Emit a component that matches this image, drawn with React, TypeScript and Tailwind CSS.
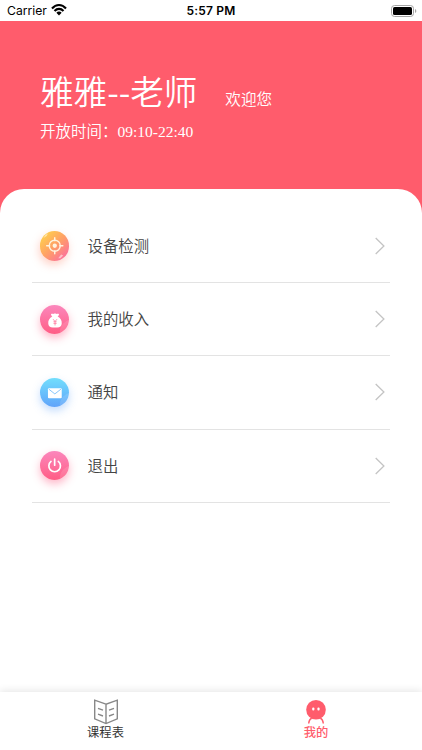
import React from "react";

type RowProps = { label: string; icon: React.ReactNode; tone: string };

function TargetIcon() {
  return (
    <svg viewBox="0 0 30 30" className="size-full" fill="none" stroke="#fff3df">
      <path d="M3.5 7 Q5 3.5 8 2.6 L6.8 5 Z M18.5 27.6 L21.5 24 L23.6 24.8 L20.8 27.6 Z" fill="#fff" fillOpacity=".5" stroke="none" />
      <circle cx="15" cy="15" r="5.6" strokeWidth="1.4" />
      <circle cx="15" cy="15" r="2.2" fill="#fff3df" stroke="none" />
      <path d="M15 6.8v3M15 20.2v3M6.8 15h3M20.2 15h3" strokeWidth="1.5" strokeLinecap="round" />
    </svg>
  );
}

function MoneyBagIcon() {
  return (
    <svg viewBox="0 0 30 30" className="size-full">
      <path d="M30 15A15 15 0 0 1 20 29C20 21 24 17 30 15Z" fill="#fff" fillOpacity=".12" />
      <path d="M11.3 9.2c1-.8 1.9.2 2.7-.2.8-.5 1.6-.5 2.4 0 .8.5 1.7-.6 2.8.2.6.6-.8 2.1-1.4 3.1h-5.2c-.4-1-1.9-2.5-1.3-3.1Z" fill="#fff" />
      <path d="M12.5 11.8h5.5c2.9 1.4 4.3 4.2 4.1 6.9-.1 2.7-1.9 4.1-4.5 4.1h-4.6c-2.7 0-4.5-1.4-4.6-4.1-.2-2.7 1.2-5.5 4.1-6.9Z" fill="#fff" />
      <path d="m13.3 14.4 2 2.4 2-2.4M15.3 16.8v4M13.7 17h3.2M13.7 18.7h3.2" fill="none" stroke="#ff7aa0" strokeWidth=".8" />
    </svg>
  );
}

function MailIcon() {
  return (
    <svg viewBox="0 0 30 30" className="size-full">
      <path d="M30 15A15 15 0 0 1 20 29C20 21 24 17 30 15Z" fill="#fff" fillOpacity=".12" />
      <rect x="8.1" y="10.4" width="14" height="10.2" rx="1" fill="#fff" />
      <path d="m9 11.4 6.1 4.8 6.1-4.8" fill="none" stroke="#68b8fb" strokeWidth=".8" />
    </svg>
  );
}

function PowerIcon() {
  return (
    <svg viewBox="0 0 30 30" className="size-full">
      <path d="M30 15A15 15 0 0 1 20 29C20 21 24 17 30 15Z" fill="#fff" fillOpacity=".12" />
      <path d="M11.2 10.6a5.9 5.9 0 1 0 7.4 0M14.9 8.3v6.2" fill="none" stroke="#fff" strokeWidth="1.7" strokeLinecap="round" />
    </svg>
  );
}

function Row({ label, icon, tone }: RowProps) {
  return (
    <li className="flex h-[73.2px] items-center border-b border-[#e3e3e3] pl-[7.5px] pr-[5px]">
      <span className={`size-[29.5px] shrink-0 rounded-full ${tone}`}>{icon}</span>
      <span className="ml-[18.5px] flex-1 pt-[2px] text-[15.4px] leading-6">{label}</span>
      <svg viewBox="0 0 10 18" className="h-[18px] w-[10px]" fill="none" stroke="#c4c4c4" strokeWidth="1.3">
        <path d="m.7 1 8.2 8-8.2 8" />
      </svg>
    </li>
  );
}

const rows: RowProps[] = [
  { label: "设备检测", icon: <TargetIcon />, tone: "bg-linear-[135deg,#ffd04d_10%,#ffa065_50%,#fb6f9e_90%] shadow-[-1px_4px_8px_#ff8a6f60]" },
  { label: "我的收入", icon: <MoneyBagIcon />, tone: "bg-linear-to-b from-[#fb86bc] to-[#ff5c85] shadow-[0_4px_8px_#ff5c8570]" },
  { label: "通知", icon: <MailIcon />, tone: "bg-linear-to-b from-[#72defc] to-[#60a3fa] shadow-[0_4px_8px_#60a3fa60]" },
  { label: "退出", icon: <PowerIcon />, tone: "bg-linear-to-b from-[#fb86bc] to-[#ff5c85] shadow-[0_4px_8px_#ff5c8570]" },
];

function StatusBar() {
  return (
    <div className="grid h-[21px] shrink-0 grid-cols-3 items-center bg-white pl-[7px] pr-[5px] font-['Inter',sans-serif] text-[12px] leading-none text-black">
      <div className="flex items-center gap-[4px]">
        <span className="pt-[2px] text-[12.2px] font-normal">Carrier</span>
        <svg viewBox="0 0 16 12" className="h-[12px] w-[16px]" fill="none" stroke="#000" strokeWidth="2.1">
          <path d="M1 4.5C5-.1 11-.1 15 4.5M3.5 7c2.6-2.8 6.4-2.8 9 0" />
          <path d="M5.4 8.7c1.5-1.5 3.7-1.5 5.2 0L8 11.4Z" fill="#000" stroke="none" />
        </svg>
      </div>
      <span className="pr-[2px] pt-[1px] text-center font-semibold tracking-[.2px]">5:57 PM</span>
      <svg viewBox="0 0 26 12" className="h-[12px] w-[26px] justify-self-end">
        <rect x=".5" y=".5" width="22" height="11" rx="3" fill="none" stroke="#a5a5a5" />
        <rect x="2" y="2" width="19" height="8" rx="1.6" />
        <path d="M24 4v4c1.8-.7 1.8-3.3 0-4Z" fill="#a5a5a5" />
      </svg>
    </div>
  );
}

export default function App() {
  return (
    <div className="flex h-[750px] w-[422px] flex-col overflow-hidden bg-[#ff5c6c] font-['Liberation_Serif','Noto_Sans_CJK_SC',sans-serif] font-[350]">
      <StatusBar />
      <header className="h-[168px] shrink-0 pl-[40px] pt-[48px] text-white">
        <div className="flex items-baseline">
          <h1 className="font-['Noto_Sans_CJK_SC',sans-serif] text-[33.6px] leading-[44px]">雅雅--老师</h1>
          <span className="ml-[28px] text-[15.6px]">欢迎您</span>
        </div>
        <p className="mt-[7px] text-[15.5px] leading-6">开放时间：09:10-22:40</p>
      </header>
      <main className="flex-1 rounded-t-[24px] bg-white px-[32px] pt-[21px] text-[#444]">
        <ul>
          {rows.map((row) => (
            <Row key={row.label} {...row} />
          ))}
        </ul>
      </main>
      <nav className="grid h-[58px] shrink-0 grid-cols-2 bg-white font-['Noto_Sans_CJK_SC',sans-serif] text-[12.3px] font-normal shadow-[0_-1px_8px_#0000001c]">
        <a className="flex flex-col items-center pt-[7px] text-[#333]">
          <svg viewBox="0 0 26 26" className="h-[26px] w-[26px]" fill="none" stroke="#888" strokeWidth="1.4">
            <path d="M13 5.2 1.7 1.2v18.6L13 24.6l11.3-4.8V1.2ZM13 5.2v19.4M5 9.4l5 1.8M5 15.2l5 1.8M21 9.4l-5 1.8M21 15.2l-5 1.8" />
          </svg>
          <span className="-mt-px leading-[16px]">课程表</span>
        </a>
        <a className="flex flex-col items-center pr-[1px] pt-[7px] text-[#ff5c6c]">
          <svg viewBox="0 0 26 26" className="h-[26px] w-[26px]">
            <circle cx="13" cy="10.7" r="9.8" fill="#ff5c6c" />
            <path d="M8.8 19.3c-1.8.7-2.8 2.4-3.1 5.2M17.2 19.3c1.8.7 2.8 2.4 3.1 5.2" fill="none" stroke="#ff5c6c" strokeWidth="1.5" />
            <rect x="9.2" y="8.6" width="2.2" height="2.8" rx="1" fill="#fff" />
            <rect x="14.4" y="8.6" width="2.2" height="2.8" rx="1" fill="#fff" />
          </svg>
          <span className="-mt-px font-medium leading-[16px]">我的</span>
        </a>
      </nav>
    </div>
  );
}
